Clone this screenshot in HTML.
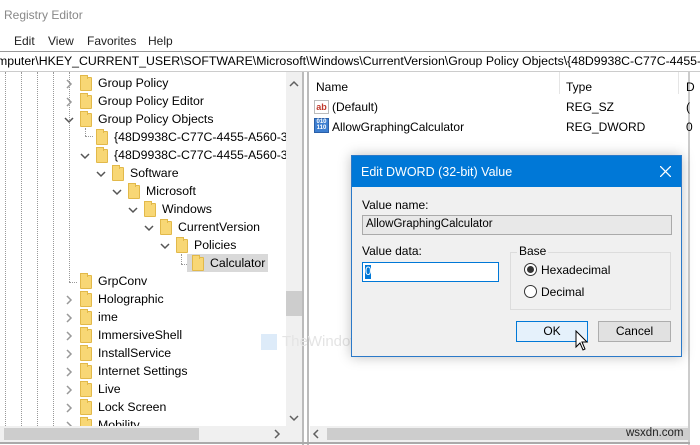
<!DOCTYPE html>
<html><head><meta charset="utf-8"><style>
*{margin:0;padding:0;box-sizing:border-box}
body{width:700px;height:445px;overflow:hidden;background:#fff;font-family:"Liberation Sans",sans-serif;font-size:12px;color:#000;position:relative}
.a{position:absolute;white-space:nowrap}
.f{position:absolute;width:12px;height:14px;background:#f8d775;border:1px solid #e2b94a;border-radius:1px}
.f:before{content:"";position:absolute;left:-1px;top:-3px;width:6px;height:3px;background:#f8d775;border:1px solid #e2b94a;border-bottom:none}
.dl{position:absolute;border-left:1px dotted #999;width:0}
</style></head><body>
<div class="a" style="left:4px;top:8px;font-size:12px;color:#888">Registry Editor</div>
<div class="a" style="left:14px;top:34px;color:#222">Edit</div>
<div class="a" style="left:48px;top:34px;color:#222">View</div>
<div class="a" style="left:87px;top:34px;color:#222">Favorites</div>
<div class="a" style="left:148px;top:34px;color:#222">Help</div>
<div class="a" style="left:0;top:51px;width:700px;height:21px;border-top:1px solid #999;border-bottom:1px solid #ccc;overflow:hidden"><div class="a" style="left:-3px;top:2px;font-size:12.3px">mputer\HKEY_CURRENT_USER\SOFTWARE\Microsoft\Windows\CurrentVersion\Group Policy Objects\{48D9938C-C77C-4455-A560-3C</div></div>
<div class="dl" style="left:5px;top:72px;height:354px"></div>
<div class="dl" style="left:21px;top:72px;height:354px"></div>
<div class="dl" style="left:37px;top:72px;height:354px"></div>
<div class="dl" style="left:53px;top:72px;height:354px"></div>
<div class="dl" style="left:69px;top:72px;height:210px"></div>
<div class="dl" style="left:85px;top:128px;height:8px"></div>
<div class="a" style="left:85px;top:136px;width:8px;border-top:1px dotted #999"></div>
<div class="a" style="left:69px;top:282px;width:8px;border-top:1px dotted #999"></div>
<div class="dl" style="left:181px;top:254px;height:10px"></div>
<div class="a" style="left:181px;top:264px;width:8px;border-top:1px dotted #999"></div>
<div class="a" style="left:187px;top:254px;width:81px;height:18px;background:#d9d9d9"></div>
<div id="tree"></div>
<div class="a" style="left:286px;top:72px;width:16px;height:354px;background:#f0f0f0"></div>
<div class="a" style="left:286px;top:291px;width:16px;height:25px;background:#cdcdcd"></div>
<svg class="a" style="left:289px;top:80px" width="10" height="8"><path d="M1 6 L5 2 L9 6" fill="none" stroke="#606060" stroke-width="1.5"/></svg>
<svg class="a" style="left:289px;top:414px" width="10" height="8"><path d="M1 2 L5 6 L9 2" fill="none" stroke="#606060" stroke-width="1.5"/></svg>
<div class="a" style="left:0;top:426px;width:302px;height:16px;background:#f0f0f0"></div>
<div class="a" style="left:4px;top:428px;width:195px;height:12px;background:#cdcdcd"></div>
<svg class="a" style="left:273px;top:429px" width="8" height="10"><path d="M2 1 L6 5 L2 9" fill="none" stroke="#606060" stroke-width="1.5"/></svg>
<div class="a" style="left:302px;top:72px;width:2px;height:373px;background:#bbb"></div>
<div class="a" style="left:307px;top:72px;width:2px;height:373px;background:#bbb"></div>
<div class="a" style="left:688px;top:72px;width:2px;height:373px;background:#ccc"></div>
<div class="a" style="left:0;top:442px;width:690px;height:2px;background:#aaa"></div>
<div class="a" style="left:316px;top:80px">Name</div>
<div class="a" style="left:559px;top:72px;width:1px;height:22px;background:#e5e5e5"></div>
<div class="a" style="left:566px;top:80px">Type</div>
<div class="a" style="left:678px;top:72px;width:1px;height:22px;background:#e5e5e5"></div>
<div class="a" style="left:686px;top:80px">D</div>
<div class="a" style="left:314px;top:100px;width:15px;height:14px;border:1px solid #bbb;font-size:9px;color:#c0392b;font-weight:bold;line-height:12px;text-align:center;background:#fff">ab</div>
<div class="a" style="left:332px;top:100px">(Default)</div>
<div class="a" style="left:566px;top:100px">REG_SZ</div>
<div class="a" style="left:686px;top:100px">(</div>
<div class="a" style="left:314px;top:118px;width:15px;height:15px;background:#3d7fd1;border:1px solid #2a5fa8;font-size:6px;color:#fff;line-height:6px;text-align:center;font-weight:bold">010<br>110</div>
<div class="a" style="left:332px;top:120px">AllowGraphingCalculator</div>
<div class="a" style="left:566px;top:120px">REG_DWORD</div>
<div class="a" style="left:686px;top:120px">0</div>
<div class="a" style="left:310px;top:426px;width:378px;height:16px;background:#f0f0f0"></div>
<svg class="a" style="left:312px;top:429px" width="8" height="10"><path d="M6 1 L2 5 L6 9" fill="none" stroke="#606060" stroke-width="1.5"/></svg>
<div class="a" style="left:327px;top:428px;width:361px;height:12px;background:#cdcdcd"></div>
<div class="a" style="left:626px;top:427px;font-size:11.5px;color:#222">wsxdn.com</div>
<div class="a" style="left:261px;top:334px;width:16px;height:16px;background:#cfe3f7;opacity:.7"></div>
<div class="a" style="left:282px;top:333px;font-size:15px;color:#e4e4e4">TheWindowsClub</div>
<div class="a" style="left:351px;top:155px;width:331px;height:202px;background:#f0f0f0;border:1px solid #2b79c8;box-shadow:0 0 12px rgba(0,0,0,.25);overflow:hidden">
 <div class="a" style="left:0;top:0;width:329px;height:31px;background:#0078d7"></div>
 <div class="a" style="left:9px;top:9px;color:#fff;font-size:12.5px">Edit DWORD (32-bit) Value</div>
 <svg class="a" style="left:308px;top:10px" width="11" height="11"><path d="M0 0 L11 11 M11 0 L0 11" stroke="#fff" stroke-width="1.3"/></svg>
 <div class="a" style="left:10px;top:42px">Value name:</div>
 <div class="a" style="left:10px;top:59px;width:310px;height:20px;background:#e8e8e8;border:1px solid #aaa"></div>
 <div class="a" style="left:14px;top:62px;font-size:11.5px">AllowGraphingCalculator</div>
 <div class="a" style="left:10px;top:88px">Value data:</div>
 <div class="a" style="left:10px;top:106px;width:137px;height:20px;background:#fff;border:1px solid #0078d7"></div>
 <div class="a" style="left:13px;top:109px;width:6px;height:14px;background:#0078d7;color:#fff;font-size:11.5px;line-height:14px">0</div>
 <div class="a" style="left:158px;top:96px;width:161px;height:58px;border:1px solid #dcdcdc"></div>
 <div class="a" style="left:165px;top:88px;background:#f0f0f0;padding:0 2px">Base</div>
 <div class="a" style="left:172px;top:107px;width:13px;height:13px;border:1px solid #333;border-radius:50%;background:#fff"></div>
 <div class="a" style="left:175px;top:110px;width:7px;height:7px;border-radius:50%;background:#333"></div>
 <div class="a" style="left:189px;top:107px">Hexadecimal</div>
 <div class="a" style="left:172px;top:129px;width:13px;height:13px;border:1px solid #333;border-radius:50%;background:#fff"></div>
 <div class="a" style="left:189px;top:129px">Decimal</div>
 <div class="a" style="left:164px;top:165px;width:72px;height:21px;background:#e5f1fb;border:1px solid #0078d7;text-align:center;line-height:19px">OK</div>
 <div class="a" style="left:246px;top:165px;width:73px;height:21px;background:#e1e1e1;border:1px solid #adadad;text-align:center;line-height:19px">Cancel</div>
</div>
<svg class="a" style="left:575px;top:330px" width="14" height="22" viewBox="0 0 14 22"><path d="M1 1 L1 17 L5 13 L8 20 L10 19 L7 12 L12 12 Z" fill="#fff" stroke="#000" stroke-width="1"/></svg>
<script>
var rows=[[0,'Group Policy','r'],[0,'Group Policy Editor','r'],[0,'Group Policy Objects','d'],[1,'{48D9938C-C77C-4455-A560-3C2',''],[1,'{48D9938C-C77C-4455-A560-3C2','d'],[2,'Software','d'],[3,'Microsoft','d'],[4,'Windows','d'],[5,'CurrentVersion','d'],[6,'Policies','d'],[7,'Calculator',''],[0,'GrpConv',''],[0,'Holographic','r'],[0,'ime','r'],[0,'ImmersiveShell','r'],[0,'InstallService','r'],[0,'Internet Settings','r'],[0,'Live','r'],[0,'Lock Screen','r'],[0,'Mobility','r']];
var h='';rows.forEach(function(r,i){var y=74+i*18,x=r[0]*16;
if(r[2]=='r')h+='<svg class="a" style="left:'+(65+x)+'px;top:'+(y+4)+'px" width="8" height="12"><path d="M2 2 L6 6 L2 10" fill="none" stroke="#999" stroke-width="1.5"/></svg>';
if(r[2]=='d')h+='<svg class="a" style="left:'+(63+x)+'px;top:'+(y+6)+'px" width="12" height="8"><path d="M2 2 L6 6 L10 2" fill="none" stroke="#555" stroke-width="1.5"/></svg>';
h+='<div class="f" style="left:'+(80+x)+'px;top:'+(y+3)+'px"></div>';
h+='<div class="a" style="left:'+(98+x)+'px;top:'+(y+2)+'px;font-size:12.3px">'+r[1]+'</div>';});
document.getElementById('tree').innerHTML=h;
</script>
</body></html>
